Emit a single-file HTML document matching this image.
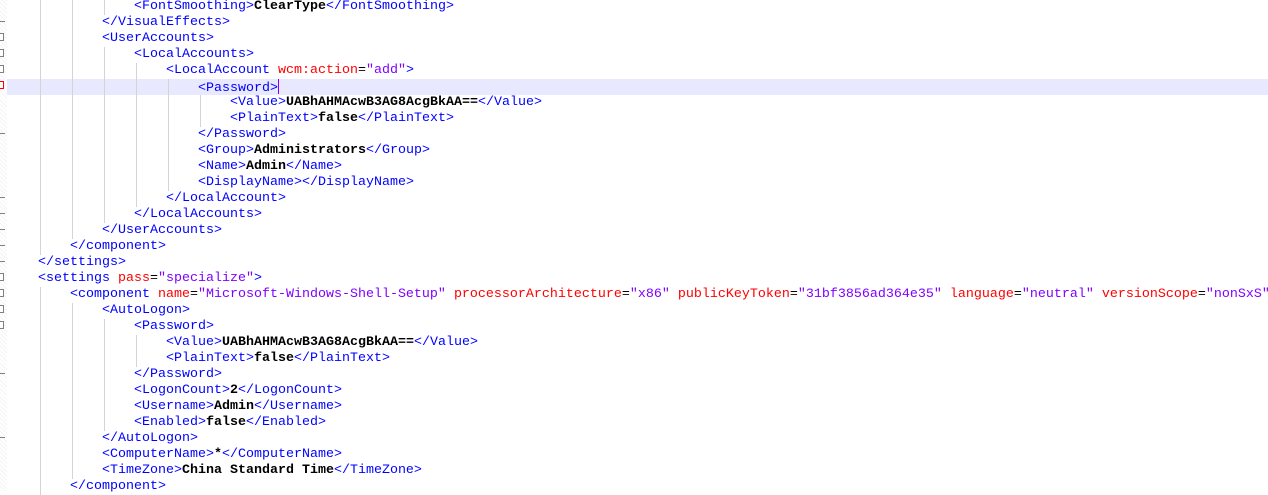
<!DOCTYPE html>
<html><head><meta charset="utf-8"><style>
body{margin:0;width:1268px;height:491px;overflow:hidden;background:#fff;position:relative;font-family:"Liberation Mono","Courier New",monospace;font-size:13.33px}
.gut{position:absolute;left:0;top:0;width:7px;height:491px;background:repeating-linear-gradient(45deg,#f4f4f4 0 1px,#fff 1px 3px)}
.w{position:absolute;left:0;top:2px;width:1268px;height:491px}
.l{position:absolute;left:0;width:1268px;height:16px;line-height:16px;white-space:pre}
.g{position:absolute;top:0;left:40px;height:16px;background:repeating-linear-gradient(to right,#d4d4d4 0 1px,transparent 1px 32px)}
.t{position:absolute;top:0}
.hl{background:#e8e8ff}
b{color:#0000ff;font-weight:normal}
i{color:#ff0000;font-style:normal}
u{color:#8000ff;text-decoration:none}
s{color:#000;text-decoration:none;font-weight:bold}
.fm{position:absolute;left:-4px;width:8px;height:8px;border:1px solid #808080;background:#fff;box-sizing:border-box}
.fr{border-color:#f00}
.dash{position:absolute;left:0;width:5px;height:1px;background:#808080}
.caret{display:inline-block;width:1px;height:15px;background:#8000ff;vertical-align:-3px}
</style></head><body>
<div class="gut"></div>
<div class="w">
<div class="l" style="top:-3px"><div class="g" style="width:96px"></div><span class="t" style="left:134px"><b>&lt;FontSmoothing&gt;</b><s>ClearType</s><b>&lt;/FontSmoothing&gt;</b></span></div>
<div class="l" style="top:13px"><div class="g" style="width:64px"></div><span class="t" style="left:102px"><b>&lt;/VisualEffects&gt;</b></span></div>
<div class="l" style="top:29px"><div class="g" style="width:64px"></div><span class="t" style="left:102px"><b>&lt;UserAccounts&gt;</b></span></div>
<div class="l" style="top:45px"><div class="g" style="width:96px"></div><span class="t" style="left:134px"><b>&lt;LocalAccounts&gt;</b></span></div>
<div class="l" style="top:61px"><div class="g" style="width:128px"></div><span class="t" style="left:166px"><b>&lt;LocalAccount </b><i>wcm:action</i>=<u>"add"</u><b>&gt;</b></span></div>
<div class="l hl" style="top:77px;left:7px;width:1261px"><div class="g" style="width:160px;left:33px"></div><span class="t" style="left:191px"><b>&lt;Password&gt;</b><span class="caret"></span></span></div>
<div class="l" style="top:93px"><div class="g" style="width:192px"></div><span class="t" style="left:230px"><b>&lt;Value&gt;</b><s>UABhAHMAcwB3AG8AcgBkAA==</s><b>&lt;/Value&gt;</b></span></div>
<div class="l" style="top:109px"><div class="g" style="width:192px"></div><span class="t" style="left:230px"><b>&lt;PlainText&gt;</b><s>false</s><b>&lt;/PlainText&gt;</b></span></div>
<div class="l" style="top:125px"><div class="g" style="width:160px"></div><span class="t" style="left:198px"><b>&lt;/Password&gt;</b></span></div>
<div class="l" style="top:141px"><div class="g" style="width:160px"></div><span class="t" style="left:198px"><b>&lt;Group&gt;</b><s>Administrators</s><b>&lt;/Group&gt;</b></span></div>
<div class="l" style="top:157px"><div class="g" style="width:160px"></div><span class="t" style="left:198px"><b>&lt;Name&gt;</b><s>Admin</s><b>&lt;/Name&gt;</b></span></div>
<div class="l" style="top:173px"><div class="g" style="width:160px"></div><span class="t" style="left:198px"><b>&lt;DisplayName&gt;&lt;/DisplayName&gt;</b></span></div>
<div class="l" style="top:189px"><div class="g" style="width:128px"></div><span class="t" style="left:166px"><b>&lt;/LocalAccount&gt;</b></span></div>
<div class="l" style="top:205px"><div class="g" style="width:96px"></div><span class="t" style="left:134px"><b>&lt;/LocalAccounts&gt;</b></span></div>
<div class="l" style="top:221px"><div class="g" style="width:64px"></div><span class="t" style="left:102px"><b>&lt;/UserAccounts&gt;</b></span></div>
<div class="l" style="top:237px"><div class="g" style="width:32px"></div><span class="t" style="left:70px"><b>&lt;/component&gt;</b></span></div>
<div class="l" style="top:253px"><span class="t" style="left:38px"><b>&lt;/settings&gt;</b></span></div>
<div class="l" style="top:269px"><span class="t" style="left:38px"><b>&lt;settings </b><i>pass</i>=<u>"specialize"</u><b>&gt;</b></span></div>
<div class="l" style="top:285px"><div class="g" style="width:32px"></div><span class="t" style="left:70px"><b>&lt;component </b><i>name</i>=<u>"Microsoft-Windows-Shell-Setup"</u> <i>processorArchitecture</i>=<u>"x86"</u> <i>publicKeyToken</i>=<u>"31bf3856ad364e35"</u> <i>language</i>=<u>"neutral"</u> <i>versionScope</i>=<u>"nonSxS"</u></span></div>
<div class="l" style="top:301px"><div class="g" style="width:64px"></div><span class="t" style="left:102px"><b>&lt;AutoLogon&gt;</b></span></div>
<div class="l" style="top:317px"><div class="g" style="width:96px"></div><span class="t" style="left:134px"><b>&lt;Password&gt;</b></span></div>
<div class="l" style="top:333px"><div class="g" style="width:128px"></div><span class="t" style="left:166px"><b>&lt;Value&gt;</b><s>UABhAHMAcwB3AG8AcgBkAA==</s><b>&lt;/Value&gt;</b></span></div>
<div class="l" style="top:349px"><div class="g" style="width:128px"></div><span class="t" style="left:166px"><b>&lt;PlainText&gt;</b><s>false</s><b>&lt;/PlainText&gt;</b></span></div>
<div class="l" style="top:365px"><div class="g" style="width:96px"></div><span class="t" style="left:134px"><b>&lt;/Password&gt;</b></span></div>
<div class="l" style="top:381px"><div class="g" style="width:96px"></div><span class="t" style="left:134px"><b>&lt;LogonCount&gt;</b><s>2</s><b>&lt;/LogonCount&gt;</b></span></div>
<div class="l" style="top:397px"><div class="g" style="width:96px"></div><span class="t" style="left:134px"><b>&lt;Username&gt;</b><s>Admin</s><b>&lt;/Username&gt;</b></span></div>
<div class="l" style="top:413px"><div class="g" style="width:96px"></div><span class="t" style="left:134px"><b>&lt;Enabled&gt;</b><s>false</s><b>&lt;/Enabled&gt;</b></span></div>
<div class="l" style="top:429px"><div class="g" style="width:64px"></div><span class="t" style="left:102px"><b>&lt;/AutoLogon&gt;</b></span></div>
<div class="l" style="top:445px"><div class="g" style="width:64px"></div><span class="t" style="left:102px"><b>&lt;ComputerName&gt;</b><s>*</s><b>&lt;/ComputerName&gt;</b></span></div>
<div class="l" style="top:461px"><div class="g" style="width:64px"></div><span class="t" style="left:102px"><b>&lt;TimeZone&gt;</b><s>China Standard Time</s><b>&lt;/TimeZone&gt;</b></span></div>
<div class="l" style="top:477px"><div class="g" style="width:32px"></div><span class="t" style="left:70px"><b>&lt;/component&gt;</b></span></div>
</div>
<div class="dash" style="top:21px"></div>
<div class="fm" style="top:33px"></div>
<div class="fm" style="top:49px"></div>
<div class="fm" style="top:65px"></div>
<div class="fm fr" style="top:81px"></div>
<div class="dash" style="top:133px"></div>
<div class="dash" style="top:197px"></div>
<div class="dash" style="top:213px"></div>
<div class="dash" style="top:229px"></div>
<div class="dash" style="top:245px"></div>
<div class="dash" style="top:261px"></div>
<div class="fm" style="top:273px"></div>
<div class="fm" style="top:289px"></div>
<div class="fm" style="top:305px"></div>
<div class="fm" style="top:321px"></div>
<div class="dash" style="top:373px"></div>
<div class="dash" style="top:437px"></div>
</body></html>
